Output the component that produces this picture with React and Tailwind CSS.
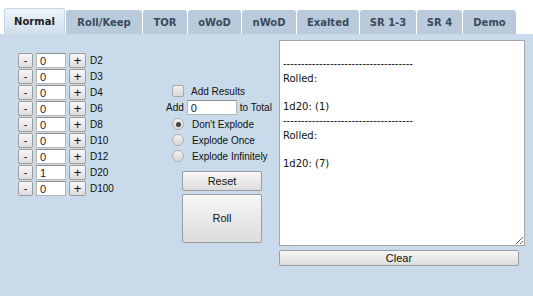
import React, { useState } from 'react';

const TABS = [
  { name: 'Normal', w: 'w-[61px]' },
  { name: 'Roll/Keep', w: 'w-[76px]' },
  { name: 'TOR', w: 'w-[44px]' },
  { name: 'oWoD', w: 'w-[53px]' },
  { name: 'nWoD', w: 'w-[54px]' },
  { name: 'Exalted', w: 'w-[62px]' },
  { name: 'SR 1-3', w: 'w-[56px]' },
  { name: 'SR 4', w: 'w-[45px]' },
  { name: 'Demo', w: 'w-[53px]' },
];

const DICE = ['D2', 'D3', 'D4', 'D6', 'D8', 'D10', 'D12', 'D20', 'D100'];

const dashes = '------------------------------------';
const LOG = `\n${dashes}\nRolled:\n\n1d20: (1)\n${dashes}\nRolled:\n\n1d20: (7)`;

const btn =
  'bg-gradient-to-b from-[#f7f7f7] to-[#dcdcdc] border border-[#9c9c9c] rounded-[2px] text-[#111] font-["Liberation_Sans",Arial,sans-serif] text-[11px] leading-none flex items-center justify-center';

const DieRow = ({ label, value }) => (
  <div className="flex items-center h-[15px]">
    <button className={`${btn} w-[15px] h-[15px]`}>-</button>
    <input
      readOnly
      value={value}
      className="ml-[3px] w-[30px] h-[15px] bg-white border border-[#b5b5b5] border-t-[#8f8f8f] pl-[3px] text-[11px] leading-none text-[#222] font-['Liberation_Sans',Arial,sans-serif] outline-none"
    />
    <button className={`${btn} ml-[3px] w-[17px] h-[15px] text-[13px]`}>+</button>
    <span className="ml-[4px] text-[10px] text-[#111]">{label}</span>
  </div>
);

const Radio = ({ checked, label }) => (
  <div className="flex items-center h-[16px]">
    <span className="ml-[6px] w-[12px] h-[12px] rounded-full border border-[#b0b0b0] bg-gradient-to-b from-[#f2f2f2] to-[#d8d8d8] flex items-center justify-center">
      {checked && <span className="w-[5px] h-[5px] rounded-full bg-[#444]" />}
    </span>
    <span className="ml-[8px] text-[10px] text-[#111]">{label}</span>
  </div>
);

export default function App() {
  const [active] = useState(0);

  return (
    <div className="w-[533px] h-[296px] bg-white flex flex-col overflow-hidden font-['Liberation_Sans',Arial,sans-serif]">
      {/* tab strip */}
      <div className="h-[34px] flex items-end pl-[4px] gap-[1px]">
        {TABS.map((t, i) =>
          i === active ? (
            <div
              key={t.name}
              className={`${t.w} h-[26px] rounded-t-[3px] border border-b-0 border-[#c3d5e6] bg-gradient-to-b from-[#eef5fb] to-[#cfdeec] flex items-center justify-center font-['DejaVu_Sans',Verdana,sans-serif] font-bold text-[10px] text-[#222]`}
            >
              {t.name}
            </div>
          ) : (
            <div
              key={t.name}
              className={`${t.w} h-[24px] rounded-t-[3px] bg-[#b9cbdb] flex items-center justify-center font-['DejaVu_Sans',Verdana,sans-serif] font-bold text-[10px] text-[#3a4a5a]`}
            >
              {t.name}
            </div>
          )
        )}
      </div>

      {/* panel */}
      <div className="flex-1 bg-[#c9dbeb] flex">
        {/* dice column */}
        <div className="w-[166px] pl-[18px] pt-[19px] flex flex-col gap-[1px]">
          {DICE.map((d) => (
            <DieRow key={d} label={d} value={d === 'D20' ? '1' : '0'} />
          ))}
        </div>

        {/* options column */}
        <div className="w-[113px] pt-[51px] flex flex-col">
          <div className="flex items-center h-[12px]">
            <span className="ml-[6px] w-[12px] h-[12px] rounded-[2px] border border-[#a9a9a9] bg-gradient-to-b from-[#f0f0f0] to-[#d9d9d9]" />
            <span className="ml-[7px] text-[10px] text-[#111]">Add Results</span>
          </div>
          <div className="flex items-center h-[15px] mt-[3px]">
            <span className="text-[10px] text-[#111]">Add</span>
            <input
              readOnly
              value="0"
              className="ml-[3px] w-[50px] h-[15px] bg-white border border-[#b5b5b5] border-t-[#8f8f8f] pl-[3px] text-[11px] leading-none text-[#222] outline-none"
            />
            <span className="ml-[3px] text-[10px] text-[#111] whitespace-nowrap">to Total</span>
          </div>
          <div className="flex flex-col mt-[1px]">
            <Radio checked label="Don't Explode" />
            <Radio label="Explode Once" />
            <Radio label="Explode Infinitely" />
          </div>
          <div className="ml-[16px] mt-[7px] flex flex-col gap-[3px]">
            <button className={`${btn} w-[80px] h-[20px]`}>Reset</button>
            <button className={`${btn} w-[80px] h-[49px]`}>Roll</button>
          </div>
        </div>

        {/* output column */}
        <div className="w-[246px] pt-[6px] flex flex-col">
          <textarea
            readOnly
            value={LOG}
            className="w-[246px] h-[206px] bg-white border border-[#a5a5a5] px-[3px] pt-[2px] pb-[1px] font-['DejaVu_Sans',Verdana,sans-serif] text-[10px] leading-[14.3px] text-[#111] outline-none overflow-hidden"
          />
          <button className={`${btn} mt-[4px] w-[240px] h-[16px]`}>Clear</button>
        </div>
      </div>
    </div>
  );
}
